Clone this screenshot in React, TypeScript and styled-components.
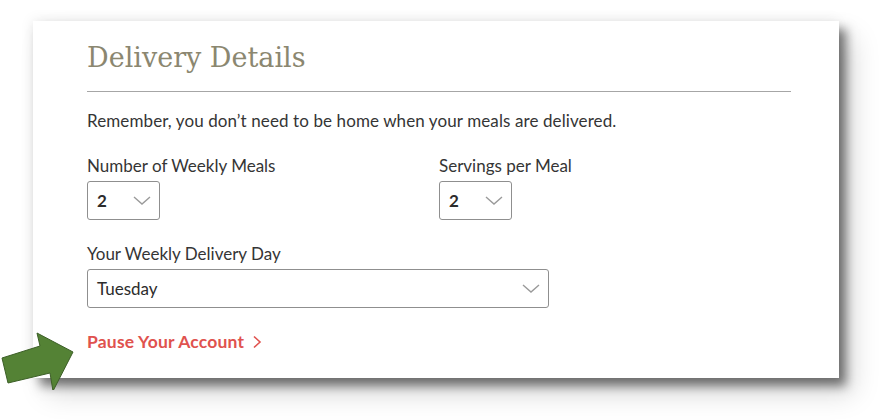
import styled, { createGlobalStyle } from 'styled-components';

const GlobalStyle = createGlobalStyle`
  html, body {
    margin: 0;
    padding: 0;
    background: #ffffff;
  }
`;

const Chevron = ({ size = 18 }: { size?: number }) => (
  <svg width={size} height={size / 2} viewBox="0 0 18 9" fill="none">
    <path d="M1 1 L9 8 L17 1" stroke="#9a9a9a" strokeWidth="1.4" />
  </svg>
);

const App = () => {
  return (
    <Page>
      <GlobalStyle />
      <Card>
        <Title>Delivery Details</Title>
        <Rule />
        <Note>Remember, you don’t need to be home when your meals are delivered.</Note>
        <Row>
          <Field $width={352}>
            <Label>Number of Weekly Meals</Label>
            <Select $width={73}>
              <Value $bold>2</Value>
              <Chevron />
            </Select>
          </Field>
          <Field>
            <Label>Servings per Meal</Label>
            <Select $width={73}>
              <Value $bold>2</Value>
              <Chevron />
            </Select>
          </Field>
        </Row>
        <Field>
          <Label>Your Weekly Delivery Day</Label>
          <Select $width={462}>
            <Value>Tuesday</Value>
            <Chevron />
          </Select>
        </Field>
        <PauseLink>
          Pause Your Account
          <svg width="10" height="14" viewBox="0 0 10 14" fill="none">
            <path d="M2 1.5 L8 7 L2 12.5" stroke="#e0524e" strokeWidth="1.6" />
          </svg>
        </PauseLink>
      </Card>
      <Arrow width="80" height="70" viewBox="0 320 80 70">
        <polygon
          points="2,358 40,346 37,333 73,352 53,391 50,373 8,383"
          fill="#548235"
          stroke="#3c5f27"
          strokeWidth="1"
        />
      </Arrow>
    </Page>
  );
};

export default App;

const Page = styled.div`
  position: relative;
  width: 881px;
  height: 420px;
  padding: 21px 0 0 33px;
  box-sizing: border-box;
  overflow: hidden;
`;

const Card = styled.div`
  width: 806px;
  height: 357px;
  box-sizing: border-box;
  background: #ffffff;
  padding: 0 48px 0 54px;
  box-shadow: 7px 8px 10px rgba(0, 0, 0, 0.5), 14px 16px 26px rgba(0, 0, 0, 0.15),
    -2px -2px 12px rgba(0, 0, 0, 0.06);
  font-family: Lato, "Open Sans", sans-serif;
  color: #353535;
  display: flex;
  flex-direction: column;
`;

const Title = styled.h1`
  margin: 17px 0 0;
  font-family: "DejaVu Serif", "Liberation Serif", serif;
  font-weight: 400;
  font-size: 27px;
  line-height: 40px;
  color: #8b8770;
`;

const Rule = styled.div`
  height: 1px;
  background: #a6a6a6;
  margin-top: 13px;
`;

const Note = styled.p`
  margin: 18px 0 0;
  font-size: 17px;
  line-height: 22px;
  letter-spacing: 0.1px;
`;

const Row = styled.div`
  display: flex;
  margin-top: 23px;
`;

const Field = styled.div<{ $width?: number }>`
  display: flex;
  flex-direction: column;
  width: ${(p) => (p.$width ? `${p.$width}px` : 'auto')};
  ${Row} + & {
    margin-top: 23px;
  }
`;

const Label = styled.div`
  font-size: 17px;
  line-height: 22px;
  margin-bottom: 4px;
`;

const Select = styled.div<{ $width: number }>`
  width: ${(p) => p.$width}px;
  height: 39px;
  box-sizing: border-box;
  border: 1px solid #8f8f8f;
  border-radius: 3px;
  display: flex;
  align-items: center;
  justify-content: space-between;
  padding: 0 8px 0 9px;
  background: #fff;
`;

const Value = styled.span<{ $bold?: boolean }>`
  font-size: 17px;
  font-weight: ${(p) => (p.$bold ? 700 : 400)};
  color: #2c2c2c;
`;

const PauseLink = styled.a`
  margin-top: 23px;
  display: inline-flex;
  align-items: center;
  gap: 8px;
  font-size: 17.5px;
  font-weight: 700;
  letter-spacing: 0.2px;
  color: #e0524e;
  cursor: pointer;
`;

const Arrow = styled.svg`
  position: absolute;
  left: 0;
  top: 320px;
`;
